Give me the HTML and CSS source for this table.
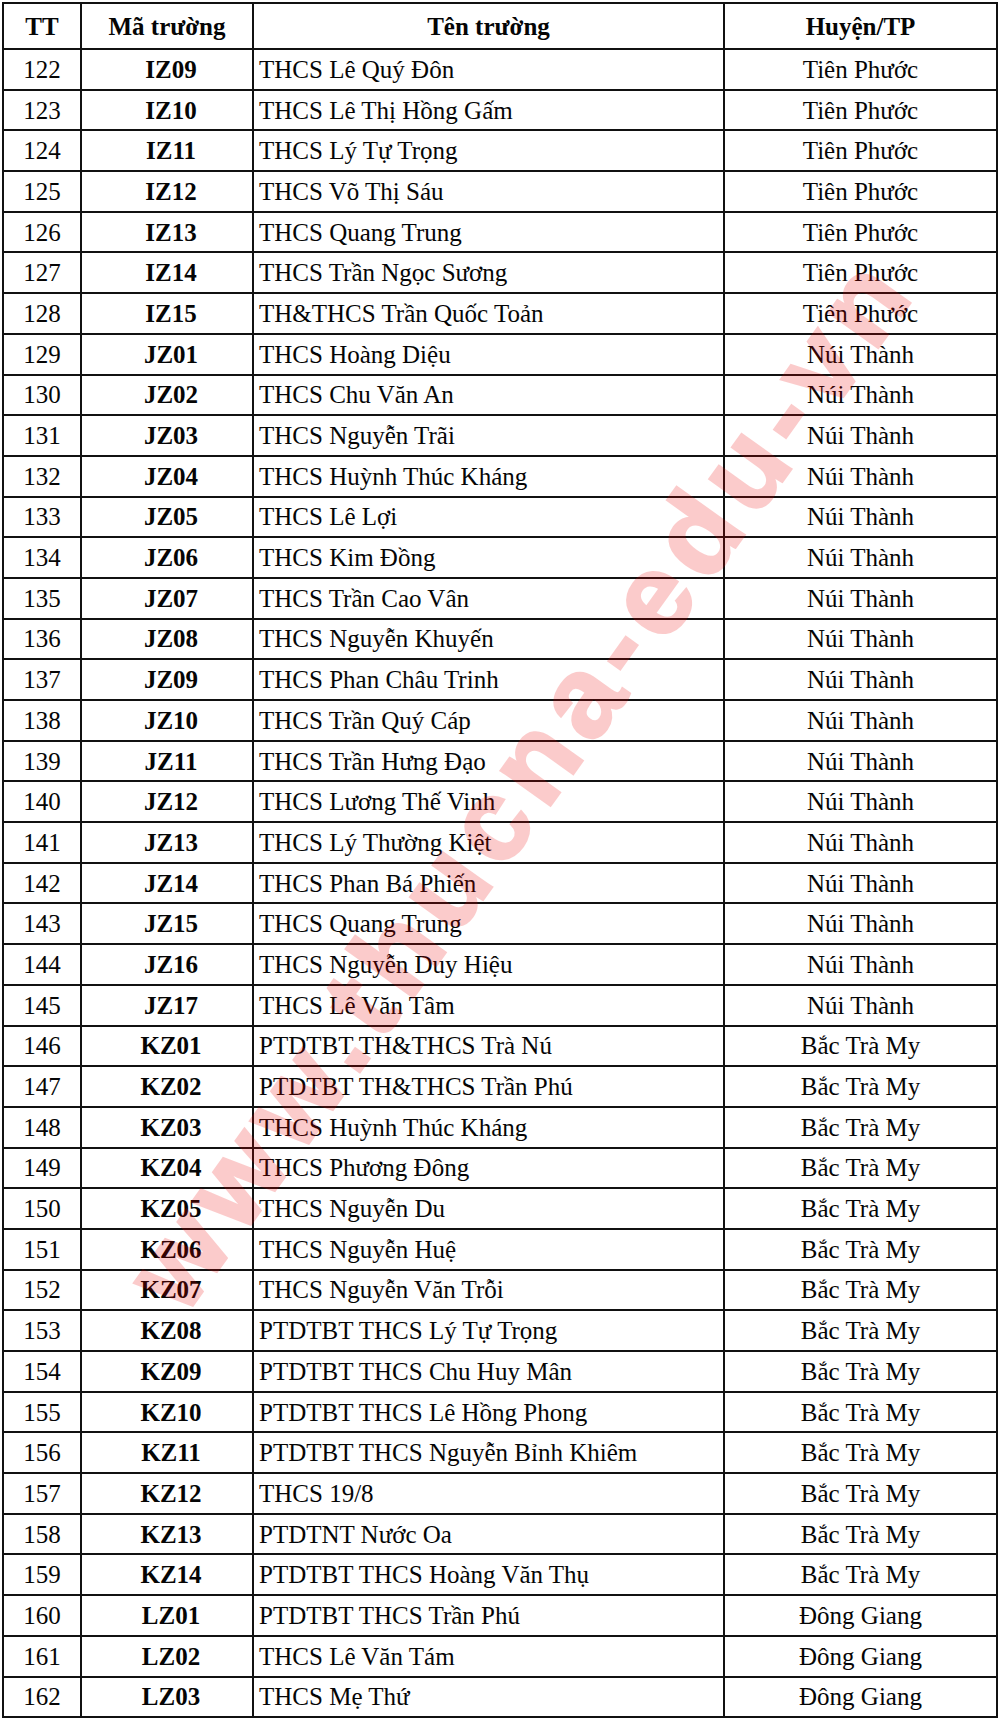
FILE: index.html
```html
<!DOCTYPE html>
<html lang="vi">
<head>
<meta charset="utf-8">
<title>Danh sách trường</title>
<link rel="stylesheet" href="styles.css">
</head>
<body>
<div class="page">
<table class="list">
<colgroup>
<col class="c-tt"><col class="c-ma"><col class="c-ten"><col class="c-huyen">
</colgroup>
<thead>
<tr><th>TT</th><th>Mã trường</th><th>Tên trường</th><th>Huyện/TP</th></tr>
</thead>
<tbody>
<tr><td>122</td><td class="code">IZ09</td><td class="name">THCS Lê Quý Đôn</td><td>Tiên Phước</td></tr>
<tr><td>123</td><td class="code">IZ10</td><td class="name">THCS Lê Thị Hồng Gấm</td><td>Tiên Phước</td></tr>
<tr><td>124</td><td class="code">IZ11</td><td class="name">THCS Lý Tự Trọng</td><td>Tiên Phước</td></tr>
<tr><td>125</td><td class="code">IZ12</td><td class="name">THCS Võ Thị Sáu</td><td>Tiên Phước</td></tr>
<tr><td>126</td><td class="code">IZ13</td><td class="name">THCS Quang Trung</td><td>Tiên Phước</td></tr>
<tr><td>127</td><td class="code">IZ14</td><td class="name">THCS Trần Ngọc Sương</td><td>Tiên Phước</td></tr>
<tr><td>128</td><td class="code">IZ15</td><td class="name">TH&amp;THCS Trần Quốc Toản</td><td>Tiên Phước</td></tr>
<tr><td>129</td><td class="code">JZ01</td><td class="name">THCS Hoàng Diệu</td><td>Núi Thành</td></tr>
<tr><td>130</td><td class="code">JZ02</td><td class="name">THCS Chu Văn An</td><td>Núi Thành</td></tr>
<tr><td>131</td><td class="code">JZ03</td><td class="name">THCS Nguyễn Trãi</td><td>Núi Thành</td></tr>
<tr><td>132</td><td class="code">JZ04</td><td class="name">THCS Huỳnh Thúc Kháng</td><td>Núi Thành</td></tr>
<tr><td>133</td><td class="code">JZ05</td><td class="name">THCS Lê Lợi</td><td>Núi Thành</td></tr>
<tr><td>134</td><td class="code">JZ06</td><td class="name">THCS Kim Đồng</td><td>Núi Thành</td></tr>
<tr><td>135</td><td class="code">JZ07</td><td class="name">THCS Trần Cao Vân</td><td>Núi Thành</td></tr>
<tr><td>136</td><td class="code">JZ08</td><td class="name">THCS Nguyễn Khuyến</td><td>Núi Thành</td></tr>
<tr><td>137</td><td class="code">JZ09</td><td class="name">THCS Phan Châu Trinh</td><td>Núi Thành</td></tr>
<tr><td>138</td><td class="code">JZ10</td><td class="name">THCS Trần Quý Cáp</td><td>Núi Thành</td></tr>
<tr><td>139</td><td class="code">JZ11</td><td class="name">THCS Trần Hưng Đạo</td><td>Núi Thành</td></tr>
<tr><td>140</td><td class="code">JZ12</td><td class="name">THCS Lương Thế Vinh</td><td>Núi Thành</td></tr>
<tr><td>141</td><td class="code">JZ13</td><td class="name">THCS Lý Thường Kiệt</td><td>Núi Thành</td></tr>
<tr><td>142</td><td class="code">JZ14</td><td class="name">THCS Phan Bá Phiến</td><td>Núi Thành</td></tr>
<tr><td>143</td><td class="code">JZ15</td><td class="name">THCS Quang Trung</td><td>Núi Thành</td></tr>
<tr><td>144</td><td class="code">JZ16</td><td class="name">THCS Nguyễn Duy Hiệu</td><td>Núi Thành</td></tr>
<tr><td>145</td><td class="code">JZ17</td><td class="name">THCS Lê Văn Tâm</td><td>Núi Thành</td></tr>
<tr><td>146</td><td class="code">KZ01</td><td class="name">PTDTBT TH&amp;THCS Trà Nú</td><td>Bắc Trà My</td></tr>
<tr><td>147</td><td class="code">KZ02</td><td class="name">PTDTBT TH&amp;THCS Trần Phú</td><td>Bắc Trà My</td></tr>
<tr><td>148</td><td class="code">KZ03</td><td class="name">THCS Huỳnh Thúc Kháng</td><td>Bắc Trà My</td></tr>
<tr><td>149</td><td class="code">KZ04</td><td class="name">THCS Phương Đông</td><td>Bắc Trà My</td></tr>
<tr><td>150</td><td class="code">KZ05</td><td class="name">THCS Nguyễn Du</td><td>Bắc Trà My</td></tr>
<tr><td>151</td><td class="code">KZ06</td><td class="name">THCS Nguyễn Huệ</td><td>Bắc Trà My</td></tr>
<tr><td>152</td><td class="code">KZ07</td><td class="name">THCS Nguyễn Văn Trỗi</td><td>Bắc Trà My</td></tr>
<tr><td>153</td><td class="code">KZ08</td><td class="name">PTDTBT THCS Lý Tự Trọng</td><td>Bắc Trà My</td></tr>
<tr><td>154</td><td class="code">KZ09</td><td class="name">PTDTBT THCS Chu Huy Mân</td><td>Bắc Trà My</td></tr>
<tr><td>155</td><td class="code">KZ10</td><td class="name">PTDTBT THCS Lê Hồng Phong</td><td>Bắc Trà My</td></tr>
<tr><td>156</td><td class="code">KZ11</td><td class="name">PTDTBT THCS Nguyễn Bỉnh Khiêm</td><td>Bắc Trà My</td></tr>
<tr><td>157</td><td class="code">KZ12</td><td class="name">THCS 19/8</td><td>Bắc Trà My</td></tr>
<tr><td>158</td><td class="code">KZ13</td><td class="name">PTDTNT Nước Oa</td><td>Bắc Trà My</td></tr>
<tr><td>159</td><td class="code">KZ14</td><td class="name">PTDTBT THCS Hoàng Văn Thụ</td><td>Bắc Trà My</td></tr>
<tr><td>160</td><td class="code">LZ01</td><td class="name">PTDTBT THCS Trần Phú</td><td>Đông Giang</td></tr>
<tr><td>161</td><td class="code">LZ02</td><td class="name">THCS Lê Văn Tám</td><td>Đông Giang</td></tr>
<tr><td>162</td><td class="code">LZ03</td><td class="name">THCS Mẹ Thứ</td><td>Đông Giang</td></tr>
</tbody>
</table>
<div class="watermark">www.thucna-edu-vn</div>
</div>
</body>
</html>
```

FILE: styles.css
```css
html, body {
  margin: 0;
  padding: 0;
  background: #ffffff;
}

.page {
  position: relative;
  width: 1000px;
  height: 1723px;
  overflow: hidden;
  padding: 2px 0 0 2px;
  box-sizing: border-box;
}

.list {
  border-collapse: collapse;
  table-layout: fixed;
  width: 994px;
  font-family: "Liberation Serif", "Times New Roman", serif;
  font-size: 25px;
  color: #050505;
}

.c-tt { width: 78px; }
.c-ma { width: 172px; }
.c-ten { width: 471px; }
.c-huyen { width: 273px; }

.list th,
.list td {
  border: 2px solid #111;
  padding: 0;
  text-align: center;
  vertical-align: middle;
  white-space: nowrap;
  line-height: 1;
}

.list thead tr {
  height: 46px;
}

.list th {
  font-weight: bold;
}

.list tbody tr {
  height: 40.7px;
}

.list td.code {
  font-weight: bold;
  padding-left: 8px;
}

.list td.name {
  text-align: left;
  padding-left: 5px;
}

.watermark {
  position: absolute;
  left: 520px;
  top: 780px;
  transform: translate(-50%, -50%) rotate(-54.4deg);
  white-space: nowrap;
  font-family: "Liberation Sans", Arial, sans-serif;
  font-weight: bold;
  font-size: 114px;
  letter-spacing: 11px;
  color: #f00000;
  -webkit-text-stroke: 3px #f00000;
  opacity: 0.2;
  pointer-events: none;
}
```
